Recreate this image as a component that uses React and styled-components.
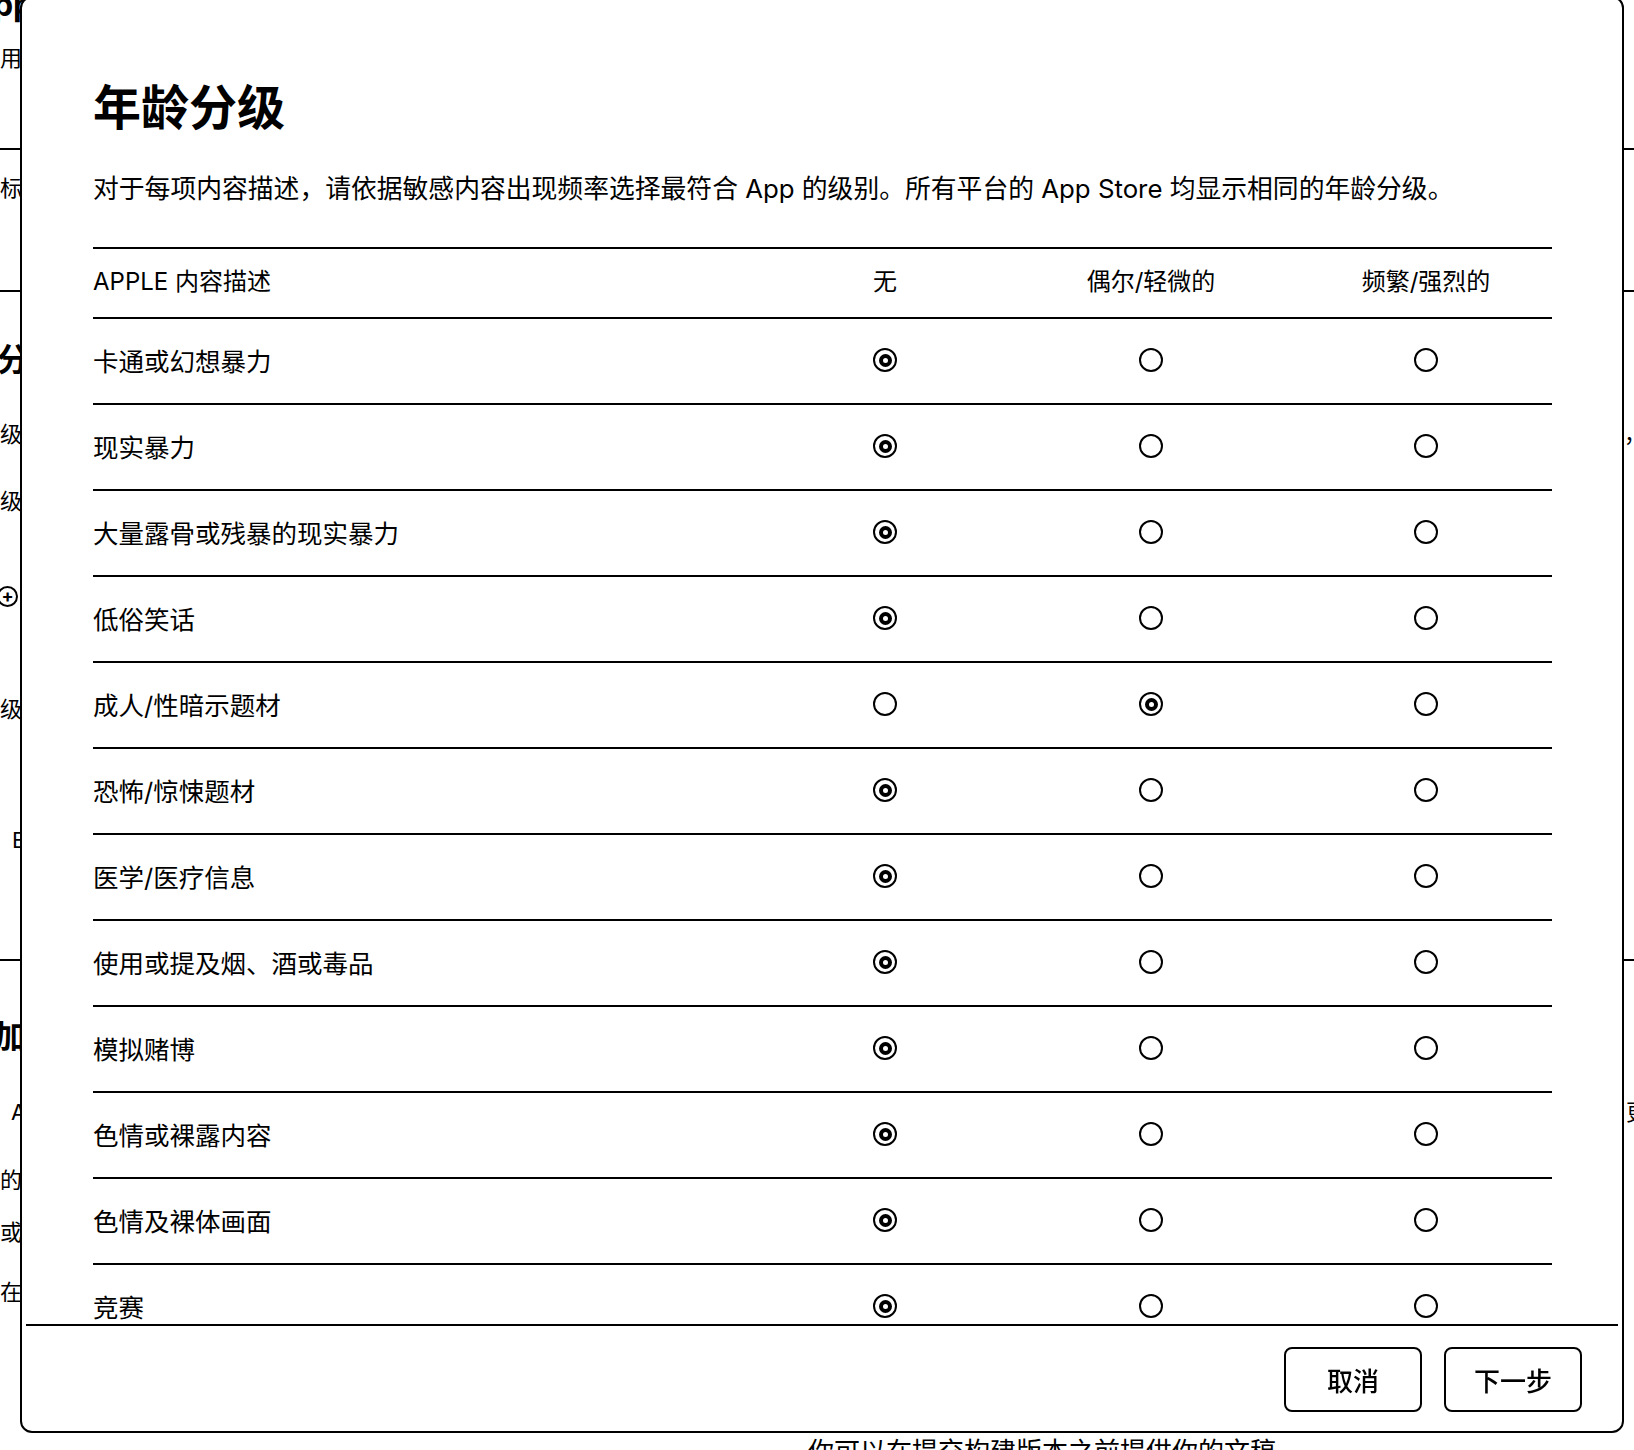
import React, { useState } from 'react'
import styled, { createGlobalStyle } from 'styled-components'

const FONT = `Inter, "Noto Sans CJK SC", "Noto Sans", sans-serif`
const COLUMNS = '675px 234px 298px 252px'

const GlobalStyle = createGlobalStyle`
  html, body {
    margin: 0;
    padding: 0;
    background: #fff;
    overflow: hidden;
  }
  body {
    font-family: ${FONT};
    color: #000;
  }
`

// background page, mostly hidden behind the dialog
const Page = styled.div`
  width: 1634px;
  height: 1450px;
  overflow: hidden;
  display: flex;
  flex-direction: column;
`
const PageSection = styled.section`
  flex: ${props => props.$grow ? '1' : 'none'};
  height: ${props => props.$h ? `${props.$h}px` : 'auto'};
  border-bottom: ${props => props.$last ? 'none' : '2px solid #000'};
  display: flex;
  flex-direction: column;
`
const PageHeading = styled.h2`
  margin: ${props => props.$top}px 0 0 ${props => props.$indent || 0}px;
  font-size: 32px;
  line-height: 30px;
  font-weight: 700;
  white-space: nowrap;
`
const PageLine = styled.div`
  margin-top: ${props => props.$top}px;
  padding-left: ${props => props.$indent || 0}px;
  height: 30px;
  display: flex;
  align-items: center;
  justify-content: space-between;
  font-size: ${props => props.$size || 22}px;
  line-height: 30px;
  white-space: nowrap;
`
const EdgeText = styled.span`
  margin-right: ${props => props.$shift}px;
`
const AddIcon = styled.span`
  margin-left: -3px;
  width: 21px;
  height: 21px;
  box-sizing: border-box;
  border: 2px solid #000;
  border-radius: 50%;
  display: flex;
  align-items: center;
  justify-content: center;
  font-size: 18px;
  font-weight: 700;
  line-height: 1;
`

// dialog
const Overlay = styled.div`
  position: fixed;
  left: 20px;
  top: -4px;
  width: 1604px;
  height: 1437px;
  box-sizing: border-box;
  border: 2px solid #000;
  border-radius: 12px;
  background: #fff;
  display: flex;
  flex-direction: column;
  overflow: hidden;
`
const DialogBody = styled.div`
  flex: 1;
  min-height: 0;
  overflow: hidden;
  padding: 86px 70px 0 71px;
`
const Title = styled.h1`
  margin: 0;
  font-size: 48px;
  line-height: 48px;
  font-weight: 700;
`
const Intro = styled.p`
  margin: 44px 0 0;
  font-size: 25.8px;
  line-height: 26px;
  white-space: nowrap;
`
const Table = styled.div`
  margin-top: 45px;
  width: 1459px;
  border-top: 2px solid #000;
`
const Row = styled.div`
  display: grid;
  grid-template-columns: ${COLUMNS};
  align-items: center;
  height: ${props => props.$head ? 68 : 84}px;
  border-bottom: 2px solid #000;
`
const HeadCell = styled.div`
  font-size: 24px;
  line-height: 24px;
  padding-bottom: 3px;
  text-align: ${props => props.$first ? 'left' : 'center'};
`
const LabelCell = styled.div`
  font-size: 25.5px;
  line-height: 26px;
  padding-top: 1px;
`
const RadioCell = styled.label`
  display: flex;
  justify-content: center;
  padding-bottom: 2px;
  cursor: pointer;
`
const Radio = styled.span`
  width: 24px;
  height: 24px;
  box-sizing: border-box;
  border: 2px solid #000;
  border-radius: 50%;
  display: flex;
  align-items: center;
  justify-content: center;
  &::after {
    content: '';
    display: ${props => props.$checked ? 'block' : 'none'};
    width: 13px;
    height: 13px;
    box-sizing: border-box;
    border: 4px solid #000;
    border-radius: 50%;
  }
`
const Footer = styled.div`
  margin: 0 4px;
  height: 84px;
  border-top: 2px solid #000;
  display: flex;
  justify-content: flex-end;
  align-items: flex-start;
  gap: 22px;
  padding: 21px 36px 0 0;
  box-sizing: content-box;
`
const Button = styled.button`
  width: 138px;
  height: 65px;
  box-sizing: border-box;
  border: 2px solid #000;
  border-radius: 8px;
  background: #fff;
  color: #000;
  font-family: ${FONT};
  font-size: 26px;
  font-weight: 500;
  cursor: pointer;
`

const LEVELS = ['无', '偶尔/轻微的', '频繁/强烈的']

const DESCRIPTORS = [
  ['卡通或幻想暴力', 0],
  ['现实暴力', 0],
  ['大量露骨或残暴的现实暴力', 0],
  ['低俗笑话', 0],
  ['成人/性暗示题材', 1],
  ['恐怖/惊悚题材', 0],
  ['医学/医疗信息', 0],
  ['使用或提及烟、酒或毒品', 0],
  ['模拟赌博', 0],
  ['色情或裸露内容', 0],
  ['色情及裸体画面', 0],
  ['竞赛', 0],
  ['赌博', 0],
]

export default function App() {
  const [ratings, setRatings] = useState(DESCRIPTORS.map(d => d[1]))

  const pick = (row, level) => {
    setRatings(ratings.map((v, i) => i === row ? level : v))
  }

  return (
    <>
      <GlobalStyle/>
      <Page>
        <PageSection $h={148}>
          <PageHeading $top={-10} $indent={-31}>App 信息</PageHeading>
          <PageLine $top={23}>用途说明</PageLine>
        </PageSection>
        <PageSection $h={140}>
          <PageLine $top={23}>标签</PageLine>
        </PageSection>
        <PageSection $h={667}>
          <PageHeading $top={53} $indent={-3}>分级</PageHeading>
          <PageLine $top={44}>
            <span>级别</span>
            <EdgeText $shift={-12}>，</EdgeText>
          </PageLine>
          <PageLine $top={37}>级别</PageLine>
          <PageLine $top={65}><AddIcon>+</AddIcon></PageLine>
          <PageLine $top={83}>级别</PageLine>
          <PageLine $top={101} $indent={12}>Beta</PageLine>
        </PageSection>
        <PageSection $grow $last>
          <PageHeading $top={61} $indent={-6}>加入</PageHeading>
          <PageLine $top={45} $indent={11}>
            <span>App</span>
            <EdgeText $shift={-14}>更</EdgeText>
          </PageLine>
          <PageLine $top={38}>的</PageLine>
          <PageLine $top={22}>或</PageLine>
          <PageLine $top={30}>在</PageLine>
          <PageLine $top={130} $indent={808} $size={26}>你可以在提交构建版本之前提供你的文稿</PageLine>
        </PageSection>
      </Page>

      <Overlay>
        <DialogBody>
          <Title>年龄分级</Title>
          <Intro>对于每项内容描述，请依据敏感内容出现频率选择最符合 App 的级别。所有平台的 App Store 均显示相同的年龄分级。</Intro>
          <Table>
            <Row $head>
              <HeadCell $first>APPLE 内容描述</HeadCell>
              {LEVELS.map(l => <HeadCell key={l}>{l}</HeadCell>)}
            </Row>
            {DESCRIPTORS.map(([name], row) => (
              <Row key={name}>
                <LabelCell>{name}</LabelCell>
                {LEVELS.map((l, level) => (
                  <RadioCell key={l} onClick={() => pick(row, level)}>
                    <Radio $checked={ratings[row] === level}/>
                  </RadioCell>
                ))}
              </Row>
            ))}
          </Table>
        </DialogBody>
        <Footer>
          <Button>取消</Button>
          <Button>下一步</Button>
        </Footer>
      </Overlay>
    </>
  )
}
